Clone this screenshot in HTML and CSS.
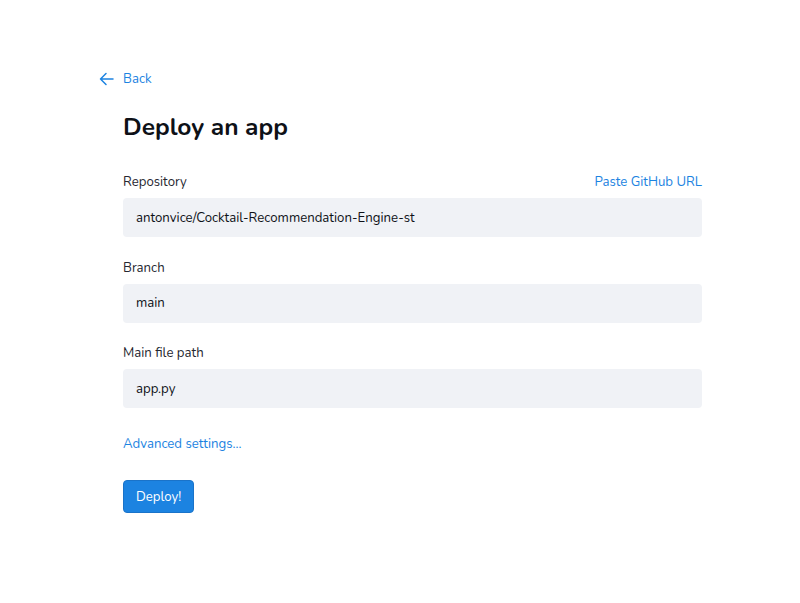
FILE: index.html
```html
<!DOCTYPE html>
<html>
  <head>
    <meta charset="utf-8">
    <title>Deploy an app</title>
    <link rel="stylesheet" href="styles.css">
  </head>
  <body>
    <div class="page">
      <a class="back" href="#">
        <svg width="15" height="14" viewBox="0 0 15 14" fill="none" stroke="currentColor" stroke-width="1.5" stroke-linecap="round" stroke-linejoin="round">
          <path d="M14 7H1.5M7 1.5L1.5 7L7 12.5"/>
        </svg>
        <span>Back</span>
      </a>

      <div class="form">
        <h1>Deploy an app</h1>

        <div class="field">
          <div class="label-row">
            <label for="repo">Repository</label>
            <a class="link" href="#">Paste GitHub URL</a>
          </div>
          <input id="repo" type="text" value="antonvice/Cocktail-Recommendation-Engine-st">
        </div>

        <div class="field">
          <div class="label-row">
            <label for="branch">Branch</label>
          </div>
          <input id="branch" type="text" value="main">
        </div>

        <div class="field">
          <div class="label-row">
            <label for="path">Main file path</label>
          </div>
          <input id="path" type="text" value="app.py">
        </div>

        <a class="link advanced" href="#">Advanced settings...</a>

        <div>
          <button class="deploy">Deploy!</button>
        </div>
      </div>
    </div>
  </body>
</html>
```

FILE: styles.css
```css
body {
  margin: 0;
  background: #fff;
  font-family: "Nunito", "Lato", "Noto Sans", sans-serif;
  color: #262730;
}

.page {
  padding: 70px 99px 0 99px;
}

a { text-decoration: none; }

.back {
  display: flex;
  align-items: center;
  gap: 9px;
  color: #1c83e1;
  font-size: 13.2px;
  height: 17px;
}
.back svg { display: block; }

.form {
  margin-left: 24px;
  width: 579px;
}

h1 {
  margin: 23px 0 0;
  font-size: 24.5px;
  font-weight: 700;
  line-height: 34px;
  color: #0e1117;
}

.field { margin-top: 28px; }
.field + .field { margin-top: 20.5px; }

.label-row {
  display: flex;
  justify-content: space-between;
  align-items: center;
  height: 20px;
  font-size: 13.2px;
  margin-bottom: 6px;
}
.label-row label { color: #262730; }

.link {
  color: #1c83e1;
  font-size: 13.2px;
}

input {
  display: block;
  box-sizing: border-box;
  width: 100%;
  height: 39px;
  border: none;
  border-radius: 4px;
  background: #f0f2f6;
  padding: 0 13px;
  font-family: inherit;
  font-size: 13.2px;
  color: #0e1117;
  outline: none;
}

.advanced {
  display: block;
  margin-top: 26px;
  line-height: 20px;
}

.deploy {
  margin-top: 26px;
  height: 33px;
  padding: 0 12px;
  border: 1px solid #1a73c9;
  border-radius: 4px;
  background: #1c83e1;
  color: #fff;
  font-family: inherit;
  font-size: 13.2px;
}
```
